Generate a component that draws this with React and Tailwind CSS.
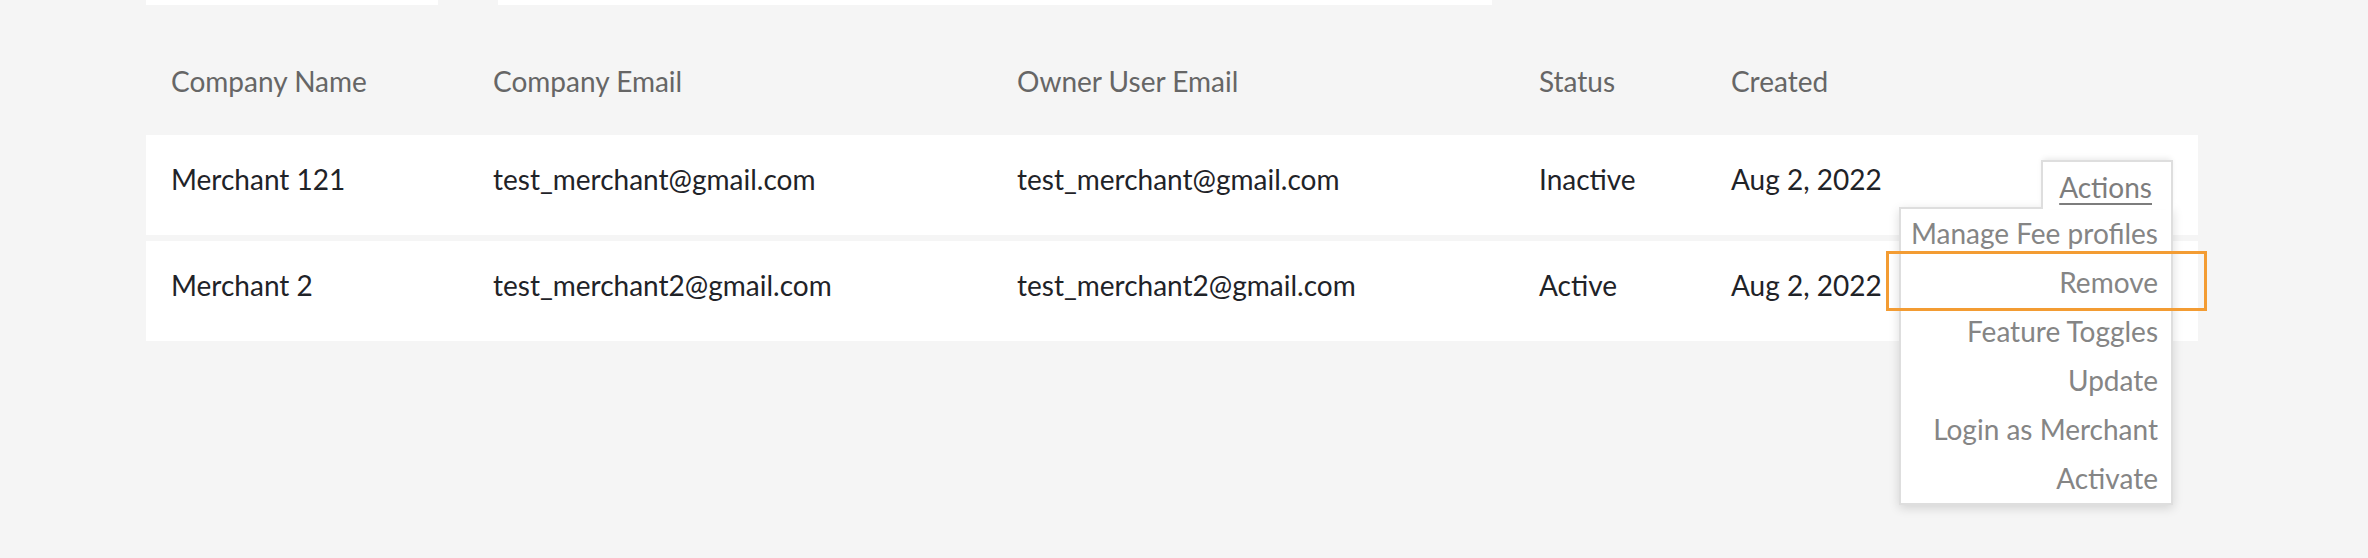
import React from "react";

const rows = [
  { name: "Merchant 121", email: "test_merchant@gmail.com", owner: "test_merchant@gmail.com", status: "Inactive", created: "Aug 2, 2022", open: true },
  { name: "Merchant 2", email: "test_merchant2@gmail.com", owner: "test_merchant2@gmail.com", status: "Active", created: "Aug 2, 2022", open: false },
];

const menu = ["Manage Fee profiles", "Remove", "Feature Toggles", "Update", "Login as Merchant", "Activate"];

const cols = "grid grid-cols-[322px_524px_522px_192px_1fr]";

export default function App() {
  return (
    <div className="relative w-full h-[558px] bg-[#f5f5f5] overflow-hidden font-['Lato',sans-serif] text-[28px]">
      <div className="flex pl-[146px] gap-[60px]">
        <div className="w-[292px] h-[5px] bg-white" />
        <div className="w-[994px] h-[5px] bg-white" />
      </div>

      <div className="ml-[146px] w-[2052px]">
        <div className={`${cols} h-[130px] pt-[59px] leading-[34px] text-[#666666]`}>
          <div className="pl-[25px]">Company Name</div>
          <div className="pl-[25px]">Company Email</div>
          <div className="pl-[25px]">Owner User Email</div>
          <div className="pl-[25px]">Status</div>
          <div className="pl-[25px]">Created</div>
        </div>

        <div className="flex flex-col gap-[6px]">
          {rows.map((r) => (
            <div key={r.name} className={`${cols} h-[100px] bg-white leading-[34px] text-[#1f2328]`}>
              <div className="pl-[25px] pt-[27px]">{r.name}</div>
              <div className="pl-[25px] pt-[27px]">{r.email}</div>
              <div className="pl-[25px] pt-[27px]">{r.owner}</div>
              <div className="pl-[25px] pt-[27px]">{r.status}</div>
              <div className="flex justify-between items-start pl-[25px]">
                <div className="pt-[27px]">{r.created}</div>
                {r.open && (
                  <div className="relative mt-[25px] mr-[25px]">
                    <div className="relative z-20 w-[132px] h-[49px] bg-white border-2 border-b-0 border-[#dedede] shadow-[0_-3px_6px_-2px_rgba(0,0,0,0.10)] pt-[8px] pr-[19px] text-right leading-[34px] text-[#7d7d7d]">
                      <span className="underline decoration-2 underline-offset-[5px]">Actions</span>
                    </div>
                    <div className="absolute z-10 right-0 top-[47px] w-[274px] bg-white border-2 border-[#dedede] shadow-[0_3px_10px_rgba(0,0,0,0.14)] text-right text-[#858585] leading-[49px] pr-[13px] pb-[0px]">
                      {menu.map((m) => (
                        <div key={m} className="h-[49px] whitespace-nowrap">{m}</div>
                      ))}
                    </div>
                  </div>
                )}
              </div>
            </div>
          ))}
        </div>
      </div>

      <div className="absolute left-[1886px] top-[251px] w-[321px] h-[60px] border-[3px] border-[#f39c33] z-30" />
    </div>
  );
}
